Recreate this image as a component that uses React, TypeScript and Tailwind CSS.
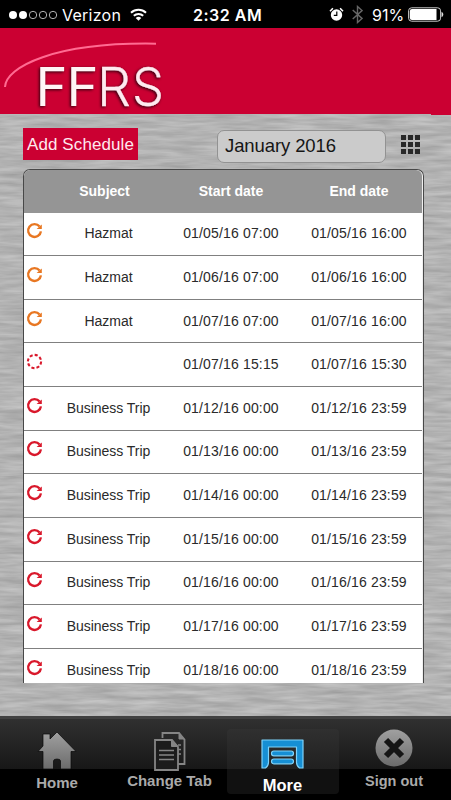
import { ReactNode } from 'react';

interface Schedule {
  subject: string;
  start: string;
  end: string;
  color: string;
  dashed?: boolean;
}

const ORANGE = '#e87722';
const RED = '#d9182b';

const schedules: Schedule[] = [
  { subject: 'Hazmat', start: '01/05/16 07:00', end: '01/05/16 16:00', color: ORANGE },
  { subject: 'Hazmat', start: '01/06/16 07:00', end: '01/06/16 16:00', color: ORANGE },
  { subject: 'Hazmat', start: '01/07/16 07:00', end: '01/07/16 16:00', color: ORANGE },
  { subject: '', start: '01/07/16 15:15', end: '01/07/16 15:30', color: RED, dashed: true },
  { subject: 'Business Trip', start: '01/12/16 00:00', end: '01/12/16 23:59', color: RED },
  { subject: 'Business Trip', start: '01/13/16 00:00', end: '01/13/16 23:59', color: RED },
  { subject: 'Business Trip', start: '01/14/16 00:00', end: '01/14/16 23:59', color: RED },
  { subject: 'Business Trip', start: '01/15/16 00:00', end: '01/15/16 23:59', color: RED },
  { subject: 'Business Trip', start: '01/16/16 00:00', end: '01/16/16 23:59', color: RED },
  { subject: 'Business Trip', start: '01/17/16 00:00', end: '01/17/16 23:59', color: RED },
  { subject: 'Business Trip', start: '01/18/16 00:00', end: '01/18/16 23:59', color: RED },
];

const StatusBar = () => (
  <div className="flex h-7 shrink-0 items-center bg-black pl-[9px] pr-[7px] pt-px font-['Inter',sans-serif] text-white">
    <svg width="49" height="12" viewBox="0 0 49 12">
      <circle cx="4" cy="6" r="4" fill="#fff" />
      <circle cx="14" cy="6" r="4" fill="#fff" />
      {[24, 34, 44].map(cx => (
        <circle key={cx} cx={cx} cy="6" r="3.7" fill="none" stroke="#ddd" strokeWidth="0.8" />
      ))}
    </svg>
    <span className="ml-1 w-[60px] whitespace-nowrap text-[16px] tracking-[0.25px]">Verizon</span>
    <svg className="ml-2" width="17" height="13" viewBox="0 0 17 13" fill="none" stroke="#fff" strokeWidth="2">
      <path d="M1 4.8a10.8 10.8 0 0 1 15 0" />
      <path d="M3.8 7.8a6.8 6.8 0 0 1 9.4 0" />
      <path d="M8.5 12.8 5.7 10a4 4 0 0 1 5.6 0z" fill="#fff" stroke="none" />
    </svg>
    <span className="ml-[46px] w-[72px] whitespace-nowrap text-[16px] font-semibold tracking-[0.5px]">2:32 AM</span>
    <svg className="ml-[64px]" width="15" height="15" viewBox="0 0 15 15" fill="none">
      <circle cx="7.5" cy="8" r="5.7" fill="#fff" />
      <path d="M1 4.2 3.9 1.3M11.1 1.3 14 4.2" stroke="#fff" strokeWidth="1.6" />
      <path d="M7.8 4.5V8.3H4.8" stroke="#000" strokeWidth="1.2" />
    </svg>
    <svg className="ml-[8px]" width="11" height="19" viewBox="0 0 11 19" fill="none" stroke="#666" strokeWidth="1.4">
      <path d="M.7 5 10 13.4 5.5 17.5V1.5L10 5.6.7 14" />
    </svg>
    <span className="ml-[9px] w-8 whitespace-nowrap text-[16px]">91%</span>
    <svg className="ml-[4px]" width="36" height="15" viewBox="0 0 36 15">
      <rect x="0.6" y="0.8" width="32" height="13.4" rx="3" fill="none" stroke="#ccc" />
      <path d="M4 2h24.5v11H4a2.2 2.2 0 0 1-2.2-2.2V4.2A2.2 2.2 0 0 1 4 2z" fill="#fff" />
      <path d="M33.5 5c2.4.6 2.4 4.4 0 5z" fill="#ddd" />
    </svg>
  </div>
);

const Logo = () => (
  <svg className="block overflow-visible" width="180" height="86" viewBox="0 28 180 86">
    <path d="M5 87C6 67 54 42 156 43.7" fill="none" stroke="#ff6b92" strokeWidth="2" />
    <g
      fontFamily="Inter, sans-serif"
      fontSize="53"
      strokeLinejoin="round"
      style={{ filter: 'drop-shadow(-1px 1px 1.5px #2c000d)' }}
    >
      <g fontWeight="400" fill="#fff4f6">
        <text x="35.5" y="106" textLength="32" lengthAdjust="spacingAndGlyphs">F</text>
        <text x="66.5" y="106" textLength="32" lengthAdjust="spacingAndGlyphs">F</text>
      </g>
      <g fontWeight="300" fill="#ffeaf0" stroke="#ffeaf0" strokeWidth="0.3">
        <text x="97" y="106" textLength="34" lengthAdjust="spacingAndGlyphs">R</text>
        <text x="132" y="106" textLength="32" lengthAdjust="spacingAndGlyphs">S</text>
      </g>
    </g>
  </svg>
);

// brushed steel: noise stretched along the x axis
const BrushedMetal = () => (
  <svg className="absolute inset-0 h-full w-full" aria-hidden="true">
    <filter id="metal" x="0" y="0" width="100%" height="100%" colorInterpolationFilters="sRGB">
      <feTurbulence type="fractalNoise" baseFrequency="0.025 0.22" numOctaves="3" seed="7" />
      <feColorMatrix values="0.2 0 0 0 0.6  0.2 0 0 0 0.6  0.2 0 0 0 0.6  0 0 0 0 1" />
    </filter>
    <rect width="100%" height="100%" filter="url(#metal)" />
  </svg>
);

const RecurIcon = ({ color, dashed }: { color: string; dashed?: boolean }) => (
  <svg width="17" height="17" viewBox="0 0 17 17" fill="none" stroke={color} strokeWidth="2.4">
    {dashed ? (
      <circle cx="8.5" cy="8.5" r="6.6" strokeWidth="2.1" strokeDasharray="3.1 2.08" />
    ) : (
      <>
        <path d="M13.6 4.6A6.4 6.4 0 1 0 14.9 9.3" />
        <path d="M15.8 2.6V7H10.6z" fill={color} stroke="none" />
      </>
    )}
  </svg>
);

const Row = ({ item }: { item: Schedule }) => (
  <div className="grid h-[43.64px] shrink-0 grid-cols-[21px_128px_116px_1fr] items-center border-b border-[#808080] bg-white text-center text-[14px] text-[#2a2a2a]">
    <div className="-mt-1.5 pl-[2px]">
      <RecurIcon color={item.color} dashed={item.dashed} />
    </div>
    <div className="-ml-px whitespace-nowrap tracking-[-0.04px]">{item.subject}</div>
    <div className="whitespace-nowrap tracking-[0.16px]">{item.start}</div>
    <div className="whitespace-nowrap pl-[7px] tracking-[0.16px]">{item.end}</div>
  </div>
);

const HomeIcon = () => (
  <svg width="40" height="40" viewBox="0 0 40 40">
    <path d="M20 1 39 20.5H34V38H23.5V30q0-2-3.5-2t-3.5 2v8H6V20.5H1L6 15V3h7v5z" fill="url(#iconGray)" stroke="#080808" strokeWidth="0.7" />
  </svg>
);

const PagesIcon = () => (
  <svg width="34" height="42" viewBox="0 0 34 42" fill="none" stroke="#858585" strokeWidth="1.8">
    <path d="M9.5 7V2H26l5.5 6.5V33H25" />
    <path d="M26 2v6h5z" fill="#858585" strokeWidth="1" />
    <path d="M2 9H19l6 7V39H2z" fill="#1c1c1c" />
    <path d="M18.5 9v6.5H25z" fill="#858585" strokeWidth="1" />
    <path d="M6 19.5H21M6 24H21M6 28.5H21M25 14h3M25 18.5h3M25 23h3" strokeWidth="1.6" />
  </svg>
);

const MoreIcon = () => (
  <svg width="43" height="31" viewBox="0 0 43 31" stroke="#7fd3fa" strokeWidth="1.2" strokeLinejoin="round">
    <path d="M1 1H42V29H38.5Q35.5 27 35.5 23V8H7.5V23Q7.5 27 4.5 29H1z" fill="#168fd4" />
    <rect x="10.5" y="12" width="22" height="4.8" rx="2.4" fill="#168fd4" />
    <rect x="10.5" y="20" width="22" height="4.8" rx="2.4" fill="#168fd4" />
  </svg>
);

const SignOutIcon = () => (
  <svg width="38" height="38" viewBox="0 0 38 38">
    <circle cx="19" cy="19" r="18.5" fill="url(#iconGray)" />
    <path d="M11 11 27 27M27 11 11 27" stroke="#151515" strokeWidth="6" />
  </svg>
);

const Tab = ({ label, icon, className }: { label: string; icon: ReactNode; className: string }) => (
  <button className={`flex flex-col items-center whitespace-nowrap font-bold leading-4 ${className}`}>
    {icon}
    <span>{label}</span>
  </button>
);

const TabBar = () => (
  <nav className="grid h-[84px] shrink-0 grid-cols-[112px_115px_112px_112px] items-start border-t-[3px] border-[#414141] bg-[linear-gradient(#303030,#171717_50px,#000_50px)] text-[#aaa]">
    <svg className="absolute h-0 w-0">
      <linearGradient id="iconGray" x1="0" y1="0" x2="0" y2="1">
        <stop offset="0" stopColor="#a0a0a0" />
        <stop offset="1" stopColor="#6b6b6b" />
      </linearGradient>
    </svg>
    <Tab label="Home" icon={<HomeIcon />} className="gap-[4px] pl-0.5 pt-[12px] text-[15px]" />
    <Tab label="Change Tab" icon={<PagesIcon />} className="gap-0 pt-[12px] text-[15px]" />
    <Tab
      label="More"
      icon={<MoreIcon />}
      className="mt-[10px] h-[65px] gap-[7px] rounded-[4px] bg-[linear-gradient(#303030,#202020_40px,#111_40px)] pr-px pt-[10px] text-[16.5px] text-white"
    />
    <Tab label="Sign out" icon={<SignOutIcon />} className="gap-[6px] pr-0.5 pt-[10px] text-[14.5px]" />
  </nav>
);

const App = () => (
  <div className="flex h-[800px] w-[451px] flex-col overflow-hidden bg-black font-['Liberation_Sans',Arial,sans-serif]">
    <StatusBar />
    <header className="h-[86px] shrink-0 bg-[#cb0032]">
      <Logo />
    </header>

    <main className="relative min-h-0 flex-1 overflow-hidden bg-[#b0b0b0]">
      <BrushedMetal />
      <div className="absolute right-0 top-0 h-px w-5 bg-[#cb0032]" />
      <div className="relative flex h-[569px] flex-col pl-[23px] pr-[27px] pt-[14px]">
        <div className="flex h-8 shrink-0 items-center">
          <button className="h-8 w-[115px] whitespace-nowrap bg-[#cb0032] pt-[2px] text-[17px] tracking-[0.1px] text-[#ffe8ee]">
            Add Schedule
          </button>
          <div className="ml-[79px] mt-1 flex h-[33px] w-[169px] items-center whitespace-nowrap rounded-[7px] border border-[#929292] bg-[#cbcbcb] pl-[7px] text-[18.5px] tracking-[-0.1px] text-[#151515]">
            January 2016
          </div>
          <div className="ml-[15px] grid grid-cols-[5px_5px_5px] gap-[2px]">
            {Array.from({ length: 9 }, (_, i) => (
              <div key={i} className="h-[5px] bg-[#292929]" />
            ))}
          </div>
        </div>

        <section className="mt-[9px] flex min-h-0 flex-1 flex-col overflow-hidden rounded-t-[7px] border border-b-0 border-[#484848] bg-[#f0f0f0] pr-[1px]">
          <div className="grid h-[42.5px] shrink-0 grid-cols-[21px_128px_116px_1fr] items-center rounded-tr-[6px] bg-[#959595] text-center text-[14px] font-bold text-white">
            <div />
            <div className="-ml-[9px]">Subject</div>
            <div>Start date</div>
            <div className="pl-[7px]">End date</div>
          </div>
          {schedules.map(item => (
            <Row key={item.start} item={item} />
          ))}
        </section>
      </div>
    </main>

    <TabBar />
  </div>
);

export default App;
